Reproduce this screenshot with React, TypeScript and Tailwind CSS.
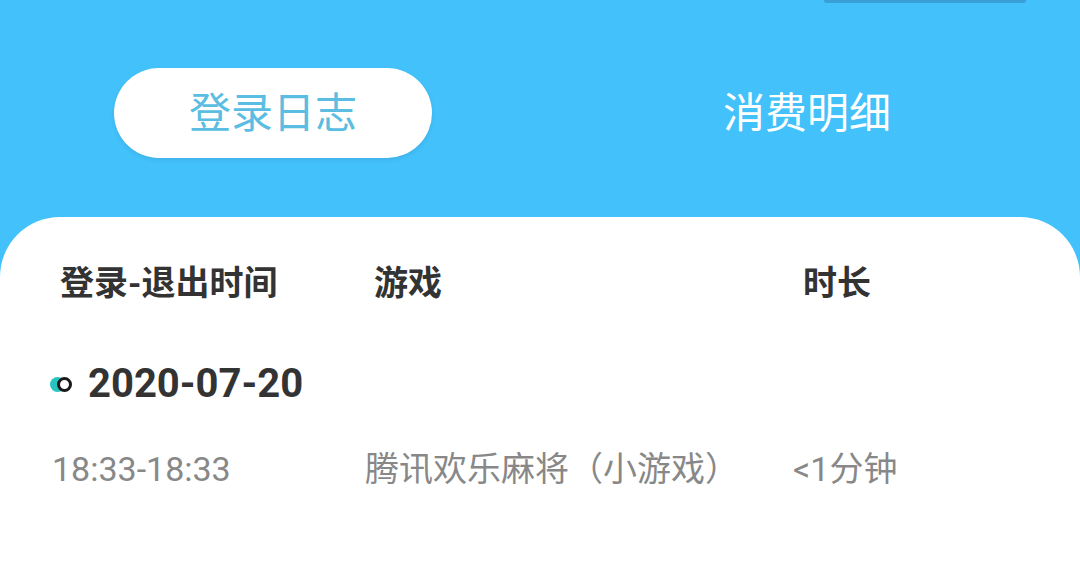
const font = "font-['Roboto','Noto_Sans_CJK_SC',sans-serif]";

export default function App() {
  return (
    <div className={`h-[580px] w-[1080px] overflow-hidden bg-[#43c1fa] ${font}`}>
      {/* top edge of a darker element cut by the screen */}
      <div className="flex justify-end pr-[54px]">
        <div className="h-[3px] w-[202px] rounded-b-[6px] bg-[#3a9fd6]" />
      </div>

      <div className="grid h-[214px] grid-cols-2 pt-[65px]">
        <div className="flex justify-center pl-[6px]">
          <button
            type="button"
            className="flex h-[90px] w-[318px] items-center justify-center rounded-full bg-white text-[42px] text-[#5bbde2] shadow-[0_2px_4px_rgba(0,0,0,0.08)]"
          >
            登录日志
          </button>
        </div>
        <div className="flex h-[90px] items-center justify-center pr-[6px] text-[42px] text-white">
          消费明细
        </div>
      </div>

      <div className="h-[363px] rounded-t-[60px] bg-white">
        <div className="grid grid-cols-[314px_429px_1fr] pl-[60px] pt-[44px] text-[34px] font-bold leading-[44px] text-[#333]">
          <span>登录-退出时间</span>
          <span>游戏</span>
          <span>时长</span>
        </div>

        <div className="mt-[53px] flex items-center gap-[16px] pl-[50px]">
          <span className="relative h-[15px] w-[22px]">
            <span className="absolute left-0 top-0 h-[15px] w-[15px] rounded-full bg-[#27c4c0]" />
            <span className="absolute left-[7px] top-0 h-[15px] w-[15px] rounded-full border-[3px] border-[#1a1a1a] bg-white" />
          </span>
          <span className="text-[40px] font-bold leading-[52px] text-[#333]">2020-07-20</span>
        </div>

        <div className="mt-[37px] grid grid-cols-[313px_428px_1fr] pl-[52px] text-[34px] leading-[44px] text-[#888]">
          <span>18:33-18:33</span>
          <span>腾讯欢乐麻将（小游戏）</span>
          <span>&lt;1分钟</span>
        </div>
      </div>
    </div>
  );
}
